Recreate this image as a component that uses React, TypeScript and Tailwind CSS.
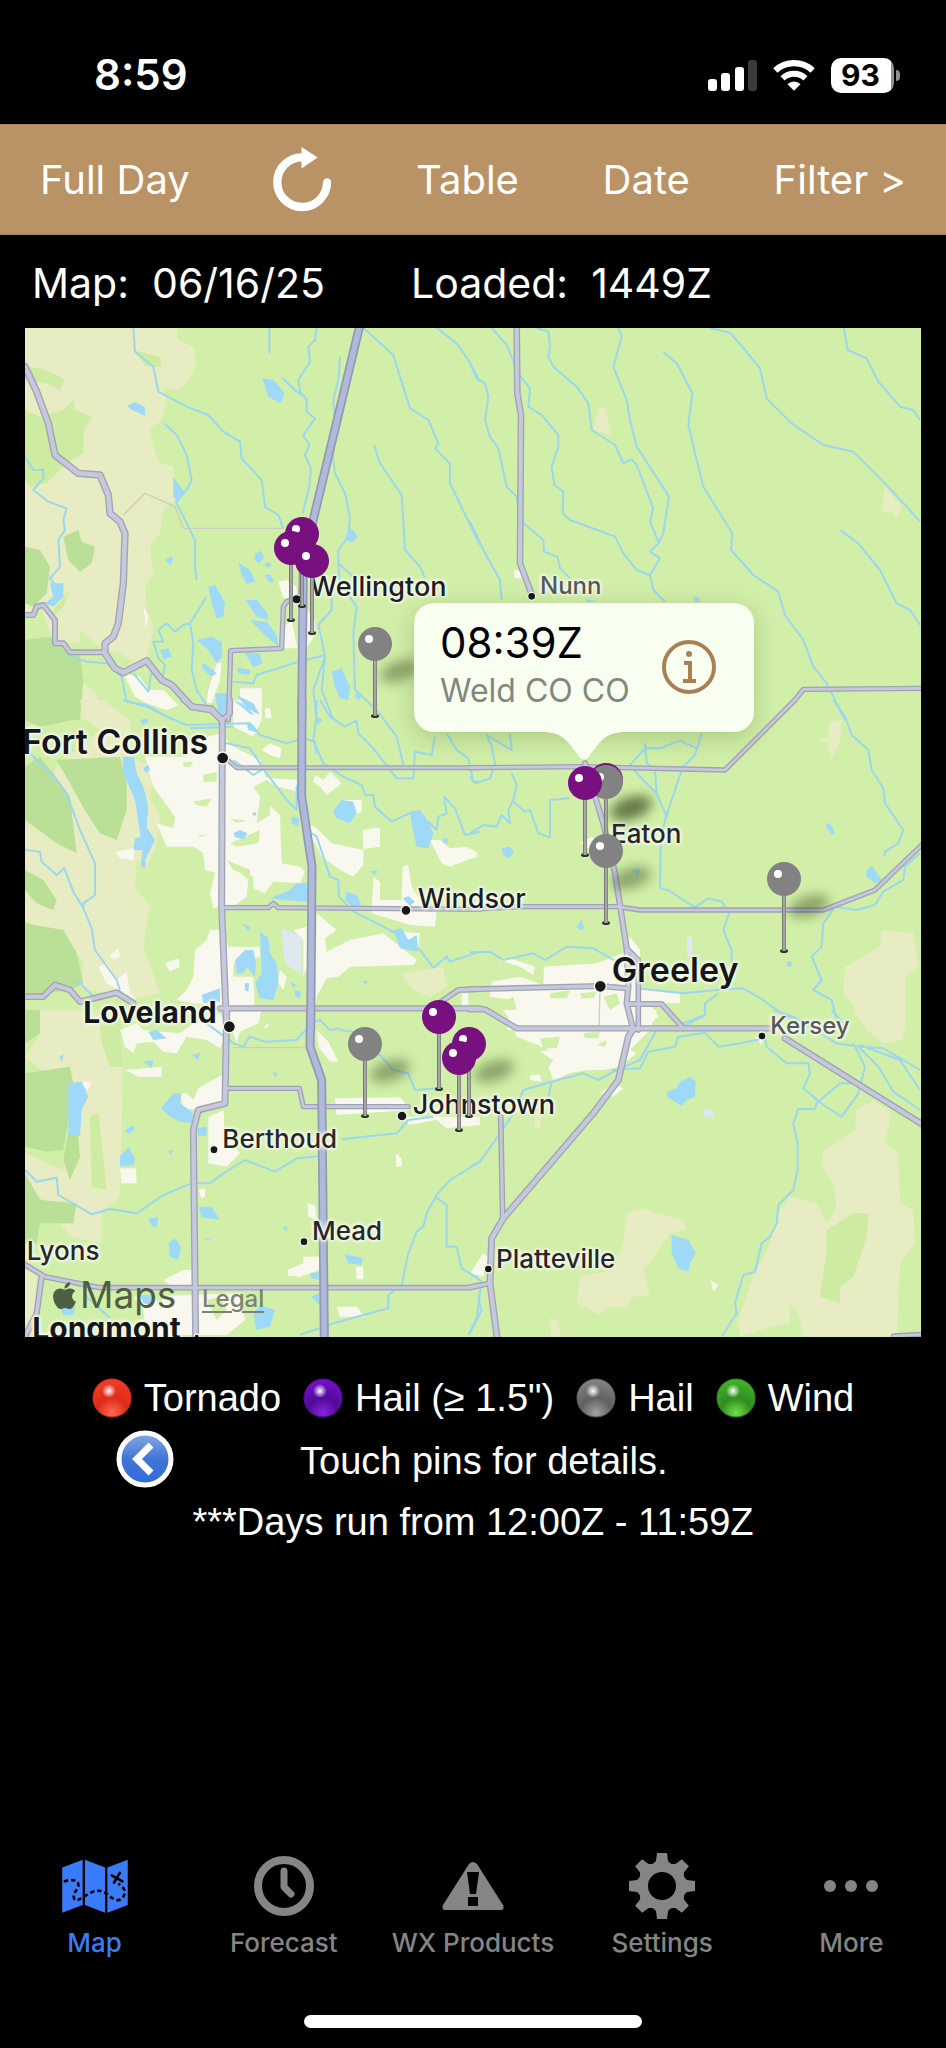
import React from 'react'
import { FaApple } from 'react-icons/fa'

// Map drawing units: three per CSS pixel at full width
const MAP_W = 2688
const MAP_H = 3027

type Road = [string, number]

type Sheet = {
  x: number
  y: number
  scrub: string[]
  meadow?: string[]
  forest?: string[]
  town: string[]
  park?: string[]
  field?: string[]
  lake: string[]
  river: string[]
  thin?: string[]
  road: Road[]
  highway?: string
}

const sheets: Sheet[] = [
  {
    x: -15,
    y: -24,
    scrub: [
      'M15 24H470L475 60 520 80 530 130 500 190 470 210 430 200 440 250 425 300 390 330 400 380 420 430 460 440 465 540 430 570 420 640 390 680 400 760 375 800 380 860 400 920 385 1000 360 1040 300 1000 250 990 180 930 180 970 100 960 60 860 15 900Z',
      'M130 1130 190 1090 230 1120 240 1200H190L140 1150Z',
    ],
    meadow: [
      'M15 140 60 145 110 165 132 180 120 210 80 190 15 180Z',
      'M130 270 160 240 165 270 215 290 190 340 190 400 140 430 80 490 30 500 15 480V270L60 290Z',
      'M340 90 420 110 425 140 380 140Z',
      'M100 870 150 810 130 860 100 890Z',
    ],
    forest: [
      'M15 680 60 690 90 740 80 820 40 860 15 850Z',
      'M130 650 175 630 185 665 225 680 215 730 180 755 145 720Z',
      'M15 960 90 950 180 1010 190 1080 180 1200H15Z',
    ],
    town: [
      'M310 1060 360 1070 385 1110 430 1110 475 1155 440 1170 380 1150 345 1130Z',
      'M660 1105H725V1165H690L660 1130Z',
      'M775 785 800 780 830 800 830 830 790 835Z',
      'M790 920 815 900 832 985 790 985Z',
      'M862 870 885 900 885 945 862 980Z',
      'M590 1030 605 1030 600 1080 575 1150 560 1150 565 1110Z',
      'M370 860 385 890 378 925Z',
      'M735 1165H750L755 1195H735Z',
    ],
    lake: [
      'M322 258 345 245 375 262 375 287 335 270Z',
      'M727 175 760 180 795 220 780 250 745 230Z',
      'M460 470 495 520 475 545 460 530Z',
      'M980 640 995 625 1013 650 1000 665 975 660Z',
      'M435 720 455 708 460 720 450 735Z',
      'M655 728 690 750 705 785 680 792 665 765Z',
      'M705 700 725 692 732 715 715 730 703 718Z',
      'M733 765 750 763 763 785 750 790Z',
      'M733 730 750 728 755 738 740 743Z',
      'M565 800 585 795 615 850 610 890 590 895 575 850Z',
      'M677 840 710 840 740 875 745 900 710 890Z',
      'M690 900 740 905 770 945 775 980 740 950Z',
      'M530 960 575 950 605 965 607 1010 590 1030 565 990Z',
      'M420 990 445 985 455 1010 430 1018Z',
      'M675 1000 720 1000 727 1030 700 1042Z',
      'M650 1042 690 1050 690 1065 655 1060Z',
      'M545 1030 560 1035 590 1060 575 1070 550 1050Z',
      'M935 1055 965 1045 990 1100 985 1140 960 1135 945 1100Z',
      'M585 1120H622V1200H600Z',
      'M650 1125 700 1150 720 1185 680 1165Z',
      'M90 790 130 790 130 830 100 860 75 850 100 830Z',
      'M1010 1115 1025 1120 1020 1140 1005 1135Z',
    ],
    river: [
      'M340 24 345 95 400 140 415 215 500 260 565 285 610 335 660 365 665 415 725 480 735 560 775 585 790 625',
      'M748 24V100',
      'M890 24 885 60 865 80 870 125 835 180 840 215 860 240 860 275 885 295 850 345 868 375 855 405 873 445 868 500 848 580',
      'M788 175 830 215 855 230',
      'M960 110 955 180 940 240 945 310 935 380 945 460 975 520 990 590 985 650 955 690 955 730 1000 770',
      'M1030 24 1120 105 1140 170 1170 265 1225 300 1255 370 1245 385 1290 430 1290 490 1380 675',
      'M1250 24 1310 70 1345 120 1380 185',
      'M1062 375 1080 430 1145 525 1155 690 1200 740 1215 775',
      'M435 312 470 345 500 405 515 480 500 510 470 535 470 550 525 660 525 740 530 780',
      'M15 410 40 450 70 450 70 475 40 510 85 545 140 565 130 600 135 630 115 660 120 740 90 775 110 800',
      'M150 1010 200 1025 260 1030 305 1070 320 1145 380 1155 460 1200',
      'M340 1060 385 1115 395 1050',
      'M560 830 510 910 490 915 465 935 440 910 415 930 430 965 400 965 415 1015 435 1035 425 1090',
      'M510 910 520 970 515 1050 530 1110 570 1170',
      'M935 830 935 870 895 915 905 960 915 1010 905 1040 880 1110 890 1200',
      'M955 690V740L960 790 1010 860 1000 940 1005 1110 1060 1160',
      'M640 1085 700 1090 710 1065 820 1030 915 1005',
      'M915 1010 905 1110 940 1200',
    ],
    thin: ['M310 585 375 520 465 560 490 625 790 625'],
    road: [
      ['M15 140 50 215 85 310 105 405 175 460 240 465 265 525 270 580 300 605 315 640 310 790 295 910 280 950 255 970 255 1000 285 1045 310 1058 380 1022 425 1080 455 1095 515 1160 575 1170 605 1200', 18],
      ['M15 885H40L50 860 70 855 105 900V970L130 970 150 997H255', 14],
      ['M625 1200 632 992 785 985 790 860 800 845 830 838', 12],
    ],
    highway: 'M1020 14 870 640 850 720 845 1200',
  },
  {
    x: 1335,
    y: -24,
    scrub: ['M383 265H405L425 345 370 330Z', 'M1245 500 1295 560 1280 595 1265 575 1235 575Z'],
    town: ['M133 750 155 752 160 775 133 775Z'],
    lake: ['M668 830 688 832 690 846 675 846Z', 'M345 838 380 842 350 846Z'],
    river: [
      'M65 24 110 75 145 160 180 205 175 260 215 285 265 345 265 380 245 440 253 495 280 515 278 580 300 600 435 650 460 700 500 750 540 765',
      'M0 130 20 175 45 190 55 230 45 300 60 350 85 385 110 500 140 530 150 600 220 660 222 695 262 710 270 745 300 775',
      'M200 24 235 35 240 80 235 110 250 140 320 200 355 250 365 330 435 375 460 430 485 418 500 435 550 565 540 605 565 665',
      'M445 24 455 50 430 140 470 240 480 300 500 380 597 530 580 640 565 670 540 695 570 715 540 765 550 810 585 845',
      'M580 97 620 130 667 220 655 315 680 420 700 500 787 640 783 690 850 765 925 815 945 885 1000 960 1030 1040 1070 1090 1125 1200',
      'M720 24 780 38 825 90 870 145 890 235 965 310 1060 375 1150 395 1245 490 1310 560 1350 605',
      'M1122 24 1133 90 1190 115 1225 185 1290 260 1330 270 1350 300',
      'M1110 630 1165 670 1230 750 1280 850 1320 870 1350 915',
      'M0 605 40 690 90 780 95 840',
    ],
    road: [
      ['M140 14 142 220 153 285 150 730 188 830', 16],
      ['M975 1140 1000 1108 1360 1105', 12],
    ],
  },
  {
    x: -15,
    y: 1116,
    scrub: [
      'M180 0H250L330 60 330 170 400 200 390 300 420 350 410 430 380 510 350 480 345 560 390 620 370 740 420 880 330 900 180 860 190 780 15 660V380L110 200 240 90 190 50Z',
      'M1140 820 1270 800 1280 860 1230 890 1180 870Z',
    ],
    forest: [
      'M15 200 60 170 100 220 150 290 170 460 110 430 15 360Z',
      'M110 180 300 170 320 250 320 330 290 420 240 400 200 340 150 250Z',
      'M15 510 70 540 110 600 100 630 50 610 15 570Z',
      'M15 670 130 690 170 760 190 850 150 870 15 890Z',
      'M15 0H180L160 60 60 80 15 60Z',
    ],
    town: [
      'M375 170H600L700 190 710 230 830 240 835 275 770 260 740 240 700 260 720 290 780 345 785 490 840 500 855 515 840 550 760 545 735 580 700 565 700 530 640 500 685 540 680 590 640 620H600L580 625 570 580 595 480 590 520 555 510 550 460 520 440 440 440 410 370 460 385 465 350 400 260Z',
      'M640 0H725V60L700 110 640 80Z',
      'M500 130 600 100 640 140 720 180 740 240 600 240 500 200Z',
      'M725 150 750 130 785 145 780 175 750 165Z',
      'M885 225 910 240 930 215 965 250 920 285 900 260 880 245Z',
      'M860 370 890 385 935 430 1030 450V495L1000 530 960 510 905 470 880 420Z',
      'M1028 390 1080 382V440L1030 447Z',
      'M1060 530 1080 545 1080 600 1145 600 1148 500 1165 495 1175 560 1200 600 1250 640 1245 680 1170 675 1055 640Z',
      'M890 640 950 690 915 715 920 755 990 720 1090 700 1190 780 1180 795 990 800 955 830 920 835 890 890 885 930Z',
      'M570 690 600 690 625 740 720 740 720 770 640 790 640 830 700 830 705 930 520 910 470 900 500 870 520 830 525 750 560 720Z',
      'M435 790 475 775 480 800 450 815Z',
      'M285 455 345 445 340 480 300 475Z',
      'M270 765 295 745 300 770 280 780Z',
      'M235 800 260 790 290 840 320 815 330 880 350 900 260 850Z',
      'M1230 420 1260 420 1290 445 1340 440 1375 470 1340 480 1290 500 1265 490Z',
      'M1325 880H1345V925H1325Z',
      'M780 810 800 830 790 870 775 850Z',
      'M820 690 860 680 860 800 850 830 850 720Z',
      'M975 300H1025V335L1000 345Z',
      'M1150 695 1200 700 1195 740 1160 730Z',
    ],
    park: [
      'M490 185H520L510 200H490Z',
      'M550 225 590 215 590 245H550Z',
      'M520 305 575 295 560 320 530 315Z',
      'M630 430 720 390 715 430 650 440Z',
      'M620 480 690 510 690 530 640 510Z',
      'M530 408 565 402 545 410Z',
      'M630 355 680 362 650 368Z',
      'M720 290 750 310 750 345 710 370 715 330Z',
    ],
    field: ['M785 685 845 710 845 825 795 790Z'],
    lake: [
      'M308 170H342L350 220 370 260 385 320 380 380 405 420 375 480 378 505 362 500 368 450 340 450 345 415 362 410 345 300 310 220Z',
      'M370 205 385 195 390 210 378 218Z',
      'M360 60 380 55 385 65 370 75Z',
      'M640 400 660 390 683 400 670 418 645 412Z',
      'M695 340 710 335 705 350Z',
      'M815 350 838 355 835 380 815 370Z',
      'M938 335 965 300 1000 305 1010 340 990 370 950 355Z',
      'M1170 335 1200 330 1225 365 1240 400 1225 445 1190 440 1180 400Z',
      'M1270 415H1283V430H1270Z',
      'M750 595 810 570 830 550 862 550V605L800 600Z',
      'M1050 515 1073 510 1065 525Z',
      'M980 575 1010 585 1025 615 1000 620 975 600Z',
      'M1148 595 1165 588 1185 605 1170 618Z',
      'M665 670 690 680 688 695Z',
      'M720 695 745 715 750 760 770 790 775 850 760 900 720 895 705 850 725 820 722 750Z',
      'M645 780 675 750 700 750 708 790 705 830 680 800 670 820 650 820Z',
      'M545 885 600 865 600 905 550 910Z',
      'M810 845 830 855 820 865Z',
      'M825 870 843 875 838 895 825 888Z',
      'M1028 840 1045 845 1035 855Z',
      'M588 0H620V50L600 45Z',
      'M675 850H687L685 875 675 870Z',
      'M640 0 665 10 705 45 690 42Z',
      'M680 70 700 75 720 100 685 90Z',
      'M890 50 908 60 892 75Z',
      'M1120 690 1145 685 1165 720 1190 705 1195 755 1140 745Z',
    ],
    river: [
      'M310 0 380 20 440 50 500 75 690 70 720 105 800 130 850 115 885 125 888 160',
      'M510 85 640 80',
      'M30 160 110 240 140 280 180 390 225 490 225 585 190 610 190 630',
      'M15 450 60 455 65 485 110 525 133 505 160 575 190 625 215 685 225 750 290 840 300 870',
      'M600 125 690 145 740 220 800 300 830 330 830 260 850 230',
      'M640 180 700 225 740 200',
      'M890 0 888 60 880 120 910 190 970 230 1025 255 1035 285 1060 285 1065 320 1115 365 1180 335',
      'M900 0 930 50 975 80 1010 62 1015 100 1060 145 1130 235 1180 235 1185 155 1235 165 1245 110',
      'M1070 30 1130 110 1150 195',
      'M1280 100 1310 150 1345 175 1360 245 1380 245',
      'M1225 365 1250 390 1255 350 1280 340 1272 290 1305 325 1335 405 1380 395',
      'M875 400 890 410 930 530 955 540 957 590 1000 635 1100 685 1125 700 1200 750 1240 803 1280 770 1290 785 1380 755',
      'M160 850 175 845 220 890',
    ],
    road: [
      ['M490 0 520 20 575 25 605 60 630 40 630 0', 14],
      ['M607 60 605 620 620 990', 17],
      ['M610 170 650 203H1380', 11],
      ['M615 623H745L760 610 775 623 1380 628', 12],
      ['M5 890H70L105 855 150 870 180 905 290 878 340 910', 16],
      ['M600 925H1380', 15],
      ['M1257 910 1315 870 1380 867', 14],
    ],
    highway: 'M846 0 845 290 876 500 872 990',
  },
  {
    x: 1335,
    y: 1116,
    scrub: [
      'M1078 65 1115 60 1110 120 1085 180 1070 130 1048 120 1075 110Z',
      'M1235 690 1330 700 1345 800 1305 830 1305 990 1205 990 1120 880 1125 800 1230 740Z',
    ],
    town: [
      'M222 800 380 790 460 760 480 710 510 750 510 865 560 870 630 880 630 910 540 910 565 950 520 990H110L125 900 60 890 65 845 150 830 220 855Z',
      'M0 445 25 460 0 472Z',
      'M90 780 120 775 195 800 190 825 150 800Z',
      'M330 430 365 410 400 440 400 470Z',
    ],
    park: [
      'M240 880 300 870 290 895 240 895Z',
      'M330 880 380 875 370 895 335 895Z',
      'M110 900 130 890 140 930 190 970 130 960Z',
      'M265 930 300 935 280 948Z',
      'M400 890 440 880 450 910 420 930Z',
    ],
    field: ['M650 710H667V770H652Z'],
    lake: [
      'M95 445 120 440 132 460 115 475 100 465Z',
      'M320 680 335 660 343 685 330 690Z',
      'M1065 375 1080 368 1095 400 1085 405Z',
      'M1188 515 1205 497 1235 540 1215 550 1190 530Z',
      'M485 510 510 508 505 525Z',
      'M950 785H965V800H952Z',
    ],
    river: [
      'M1090 0 1125 50 1145 105 1195 150 1205 210 1240 265 1245 310 1300 390 1285 430 1245 455 1243 470',
      'M0 230 15 250 60 235 75 190 65 140 50 105 125 150 120 100',
      'M125 220 140 255 130 300 115 330 120 370 95 345 80 380 40 375 0 400',
      'M130 305 165 335 180 330 205 400 240 412 240 300 300 295',
      'M525 130 530 190 555 210 560 280 590 350 595 330 625 240 640 200 675 165 695 100',
      'M680 145 630 122 570 145 525 145 480 195 510 230 560 280',
      'M590 340 572 420 570 565 595 570 640 600 675 622 715 595 755 605 777 640 760 690 785 750 785 790',
      'M0 757 60 755 100 780 190 760 225 780 290 740 370 745 450 790',
      'M500 865 640 880 740 870 820 865 880 900 940 945 1050 980',
      'M745 880 705 910 705 945 640 980',
      'M1350 460 1305 500 1300 540 1240 575 1215 615 1160 630 1095 620 1060 670 1055 740 1025 770 1055 840 1030 870 1085 900 1100 960',
    ],
    thin: ['M390 870 387 980'],
    road: [
      ['M0 203 330 200 765 210 975 0', 12],
      ['M345 190 400 370 435 520 470 745 475 860 470 910 490 990', 15],
      ['M0 628 165 620H440L510 630H1060L1215 570 1360 430', 12],
      ['M0 868 390 858 470 865', 14],
      ['M470 745 505 780V990', 13],
      ['M470 912H575L640 985', 14],
      ['M0 928H45L140 985H900', 15],
    ],
  },
  {
    x: -15,
    y: 2046,
    scrub: [
      'M60 0H250L300 60 310 120 300 560 245 610 245 700 150 680 100 610 60 560 15 520V430L130 480 150 350 90 200 15 140 60 70Z',
      'M15 775 50 800 45 900 15 950Z',
    ],
    meadow: ['M235 0 300 0 310 170 270 170 245 100Z', 'M210 320 235 310 260 540 215 530Z'],
    forest: [
      'M15 190 150 170 160 220 150 300 130 420 80 425 15 410Z',
      'M15 0H60V70L15 100Z',
      'M15 490 60 570 170 580 160 640 60 640 50 700H15Z',
      'M150 340 170 330 180 440 150 510 130 450Z',
    ],
    town: [
      'M300 60 350 40 370 60 480 70 520 40 600 10 625 60 600 115 560 90 500 80 470 130 430 125 400 95 350 100 340 130 315 110Z',
      'M625 0H725L715 40 660 65 650 100 640 70Z',
      'M315 180 425 170 425 200 355 200Z',
      'M535 235 605 195 620 280 540 300 490 295 480 250 500 250 520 270Z',
      'M565 320 612 300V370L660 430 620 470 565 460Z',
      'M300 475H348L350 520 305 520Z',
      'M535 540 555 535 555 560 545 565Z',
      'M862 580 885 585 890 630 865 620Z',
      'M803 780 850 760 850 740 900 740 898 780 840 800 805 798Z',
      'M1008 770H1030V808H1010Z',
      'M1128 430 1145 445 1145 470H1128Z',
      'M490 780 515 780 515 825H450L430 810Z',
      'M340 860 660 850 675 930 620 975H380L370 900Z',
      'M950 890 1010 890 1035 920 960 920Z',
      'M890 60 925 95 955 155 930 155 895 110Z',
      'M945 265 1140 262 1170 300 950 315Z',
      'M1160 320H1380V345L1280 355 1250 330 1165 345Z',
      'M185 215 215 215 205 240 190 230Z',
      'M730 50 750 38 740 55Z',
    ],
    park: ['M560 870 600 860 620 900 590 930Z', 'M400 860 440 850 420 880Z'],
    lake: [
      'M145 220 185 215 205 260 185 300 180 378 145 375Z',
      'M385 65 410 60 440 85 400 90Z',
      'M515 135 540 128 535 150Z',
      'M370 155 400 150 395 175Z',
      'M423 295 460 250 485 250 480 280 520 310 515 340 480 335 450 320Z',
      'M530 355 560 350 560 375 535 380Z',
      'M315 360 340 345 345 360 325 372Z',
      'M300 440 325 410 345 445 340 465 300 470Z',
      'M445 420 460 422 450 435Z',
      'M385 625 415 622 410 650 395 648Z',
      'M535 590 575 590 600 630 545 622Z',
      'M445 700 465 685 483 710 475 750 450 740Z',
      'M757 188 772 188 768 203Z',
      'M787 650 803 650 800 665Z',
      'M973 732 1028 745 1025 765 985 760Z',
      'M870 790 900 785 895 810 875 805Z',
      'M873 860 898 850 900 885Z',
      'M700 910 720 885 765 900 750 950 710 960Z',
      'M118 140 132 133 125 155Z',
      'M120 890 165 890 160 915 130 915Z',
      'M360 855 400 855 390 885 370 880Z',
      'M550 685 580 685 560 690Z',
    ],
    river: [
      'M15 480 50 515 110 503 115 555 215 613 270 597 350 610 430 555 515 520 570 520 610 490 675 450 765 485 830 445 905 438',
      'M560 40 600 70 640 100 670 110 690 80 735 95 830 90 875 40 900 30 930 60 960 55',
      'M960 60 1000 65 1075 130 1120 180 1165 190 1185 240 1260 235',
      'M965 388 1130 370 1165 330 1240 320',
      'M1380 455 1290 510 1250 555 1220 610 1210 650 1190 665 1165 730 1145 825 1105 855 1105 895 940 940 840 975',
      'M1245 560 1280 585 1280 710 1310 710 1325 775 1375 805',
      'M1380 850 1370 925 1345 975',
      'M200 860 270 925',
    ],
    thin: ['M640 113H860'],
    road: [
      ['M620 0 615 280 535 300 520 360 527 990', 17],
      ['M620 235H838L850 290H1165', 12],
      ['M5 758 75 800 240 833H1340L1380 825', 13],
      ['M65 800 50 910 15 980', 15],
    ],
    highway: 'M872 0 870 110 905 210 913 990',
  },
  {
    x: 1335,
    y: 2046,
    scrub: [
      'M1150 0H1300V90L1240 100 1190 60Z',
      'M1060 420 1155 360 1160 300 1210 270 1265 310 1245 400 1285 430 1290 580 1330 600 1335 700 1290 760 1280 980H1000L985 910 960 880 960 940 900 950 810 980 805 930 850 800 900 700 930 600 960 560 1040 580 1070 640 1100 590 1090 520 1055 470Z',
      'M470 610 520 595 560 610 640 630 650 660 600 670 560 730 520 780 540 855 490 860 470 890 410 890 390 915 320 880 330 800 430 780 460 700Z',
      'M235 925 260 930 275 980H245Z',
      'M195 310 215 300 210 355H195Z',
    ],
    meadow: ['M1070 660 1150 610 1195 610 1190 680 1150 800 1110 830 1110 880 1050 860 1060 790 1070 720Z'],
    town: [
      'M100 0H560L540 60 500 100 480 120 500 130 450 170 400 180 350 180 300 190 250 210 235 170 250 150 210 125 240 120 140 80 120 30Z',
      'M390 250 430 220 460 235 430 260Z',
      'M180 195 210 195 215 215 180 210Z',
      'M722 810 745 825 730 845Z',
      'M40 730 55 740 40 800 0 790Z',
      'M855 80 880 80 875 105Z',
    ],
    park: [
      'M210 85 270 80 260 115 220 115Z',
      'M340 70 390 65 385 85 345 85Z',
      'M380 105 410 90 405 110Z',
    ],
    field: ['M697 300 720 295 735 320 705 320Z'],
    lake: [
      'M590 245 620 235 630 215 660 200 677 215 675 260 650 270 635 288 615 275 595 265Z',
      'M605 675 655 690 677 730 660 760 655 785 625 775 605 730Z',
    ],
    river: [
      'M0 470 30 455 90 370 130 310 160 240 245 215 340 190 385 210 440 180 510 150 560 60',
      'M425 180 510 175 535 125 615 110 625 80 705 68 745 110 810 100 885 85 890 110 950 160 1015 160 1020 190 1000 235 1060 285 1115 320 1165 250 1185 170 1150 100',
      'M910 0 970 20 1100 100 1170 110 1240 115 1350 180',
      'M1085 0 1130 50',
      'M1165 110 1225 170 1270 245 1350 300',
      'M1170 105 1290 150 1350 240',
      'M1160 220H1110L1040 280 1035 297H985L970 340 983 400 983 480 970 540 925 585 920 640 900 680 875 700 855 785 820 795 795 880 800 910 755 980',
      'M640 40 705 15V0',
      'M0 790 35 815 25 870 35 900 0 970',
      'M245 215 235 260',
    ],
    road: [
      ['M490 57 475 80 445 210 370 310 100 625 65 685 60 820 82 990', 17],
      ['M92 320 98 625', 13],
      ['M0 833 60 820', 13],
      ['M945 85 1360 345', 16],
      ['M1270 978 1360 973', 12],
    ],
  },
]

type Town = [name: string, x: number, y: number, style: string]

const bigCity = 'text-[34px] font-semibold text-[#15161a]'
const city = 'text-[30px] font-bold text-[#15161a]'
const bigTown = 'text-[27px] font-medium text-[#1c1d22]'
const smallTown = 'text-[26px] font-medium text-[#26272b]'
const hamlet = 'text-[24px] font-medium text-[#55585c]'

const towns: Town[] = [
  ['Wellington', 855, 816, bigTown],
  ['Nunn', 1545, 811, hamlet],
  ['Fort Collins', -9, 1292, bigCity],
  ['Loveland', 175, 2096, city],
  ['Windsor', 1178, 1751, bigTown],
  ['Eaton', 1758, 1558, smallTown],
  ['Greeley', 1760, 1978, bigCity],
  ['Kersey', 2236, 2131, hamlet],
  ['Johnstown', 1163, 2369, bigTown],
  ['Berthoud', 592, 2473, smallTown],
  ['Mead', 861, 2748, smallTown],
  ['Lyons', 5, 2807, smallTown],
  ['Platteville', 1413, 2832, smallTown],
  ['Longmont', 22, 3044, city],
]

const dots = [
  [815, 814, 14],
  [1520, 805, 12],
  [593, 1290, 18],
  [613, 2096, 18],
  [1143, 1747, 15],
  [1726, 1975, 18],
  [2211, 2124, 12],
  [1131, 2364, 15],
  [567, 2465, 12],
  [837, 2741, 12],
  [1390, 2823, 12],
  [515, 3026, 8],
]

const pins = [
  { id: 1, x: 832, y: 617, kind: 'big', shadow: false },
  { id: 2, x: 797, y: 659, kind: 'big', shadow: false },
  { id: 3, x: 862, y: 700, kind: 'big', shadow: false },
  { id: 4, x: 1050, y: 948, kind: 'hail', shadow: true },
  { id: 5, x: 1743, y: 1357, kind: 'big', shadow: true },
  { id: 6, x: 1743, y: 1363, kind: 'hail', shadow: true },
  { id: 7, x: 1679, y: 1364, kind: 'big', shadow: false },
  { id: 8, x: 1742, y: 1569, kind: 'hail', shadow: true },
  { id: 9, x: 2276, y: 1652, kind: 'hail', shadow: true },
  { id: 10, x: 1242, y: 2067, kind: 'big', shadow: false },
  { id: 11, x: 1020, y: 2148, kind: 'hail', shadow: true },
  { id: 12, x: 1333, y: 2148, kind: 'big', shadow: true },
  { id: 13, x: 1303, y: 2189, kind: 'big', shadow: false },
]

const at = (x: number, y: number) => ({
  left: `${(x / MAP_W) * 100}%`,
  top: `${(y / MAP_H) * 100}%`,
})

function Layer({ children }: { children: (s: Sheet) => React.ReactNode }) {
  return (
    <>
      {sheets.map((s, i) => (
        <g key={i} transform={`translate(${s.x} ${s.y})`}>{children(s)}</g>
      ))}
    </>
  )
}

function Terrain() {
  return (
    <svg viewBox={`0 0 ${MAP_W} ${MAP_H}`} className="block h-auto w-full" aria-hidden="true">
      <rect width={MAP_W} height={MAP_H} fill="#d1efa8" />
      <Layer>
        {s => (
          <>
            <path d={s.scrub.join('')} fill="#e7ecc2" />
            <path d={(s.meadow ?? []).join('')} fill="#cdeca2" />
            <path d={(s.forest ?? []).join('')} fill="#badf96" />
          </>
        )}
      </Layer>
      <Layer>
        {s => (
          <>
            <path d={s.town.join('')} fill="#f8f8ef" />
            <path d={(s.park ?? []).join('')} fill="#d1efa8" />
            <path d={(s.field ?? []).join('')} fill="#dfe8f0" />
          </>
        )}
      </Layer>
      <g fill="none" strokeLinejoin="round">
        <Layer>{s => <path d={s.river.join('')} stroke="#9bd7ee" strokeWidth="6" />}</Layer>
      </g>
      <Layer>{s => <path d={s.lake.join('')} fill="#9ed9f8" />}</Layer>
      <g fill="none" strokeLinejoin="round" strokeLinecap="round">
        <Layer>{s => <path d={(s.thin ?? []).join('')} stroke="#c9cfc0" strokeWidth="4" />}</Layer>
        <Layer>{s => s.road.map(([d, w]) => <path key={d} d={d} stroke="#a0a3b5" strokeWidth={w + 4} />)}</Layer>
        <Layer>{s => s.road.map(([d, w]) => <path key={d} d={d} stroke="#c6c9db" strokeWidth={w - 4} />)}</Layer>
        <Layer>{s => <path d={s.highway ?? ''} stroke="#9098b4" strokeWidth="27" />}</Layer>
        <Layer>{s => <path d={s.highway ?? ''} stroke="#b0b9da" strokeWidth="17" />}</Layer>
      </g>
      {dots.map(([x, y, r]) => (
        <circle key={`${x}-${y}`} cx={x} cy={y} r={r} fill="#17181b" stroke="#f4f7ea" strokeWidth="4" />
      ))}
    </svg>
  )
}

function Pin({ x, y, kind, shadow }: { x: number; y: number; kind: string; shadow: boolean }) {
  return (
    <button
      type="button"
      aria-label={kind === 'big' ? 'Hail report, 1.5 inches or more' : 'Hail report'}
      className="absolute h-[92px] w-[34px] -translate-x-1/2"
      style={at(x, y - 51)}
    >
      <svg viewBox="0 0 34 92" className="block h-full w-full overflow-visible">
        {shadow && (
          <ellipse cx="42" cy="44" rx="21" ry="10" fill="#26380f" opacity="0.4" transform="rotate(-18 42 44)" className="blur-[6px]" />
        )}
        <ellipse cx="17" cy="89" rx="4" ry="2" fill="#2c332a" />
        <rect x="15" y="30" width="4" height="59" fill="#a6a6a6" />
        <rect x="15" y="30" width="1" height="59" fill="#777" />
        <rect x="18" y="30" width="1" height="59" fill="#858585" />
        <circle cx="17" cy="17" r="17" fill={kind === 'big' ? '#78107f' : '#828282'} />
        <circle cx="11" cy="12" r="4" fill="#fff" />
      </svg>
    </button>
  )
}

function Callout() {
  return (
    <div
      className="absolute flex h-[129px] w-[340px] -translate-x-1/2 items-center justify-between rounded-[20px] bg-[#f9fff0] pl-[26px] pr-[37px] shadow-[0_6px_24px_rgba(60,90,20,0.25)]"
      style={at(1677, 824)}
    >
      <div>
        <div className="text-[42px] leading-[48px] text-black">08:39Z</div>
        <div className="text-[32px] leading-[48px] text-[#82877c]">Weld CO CO</div>
      </div>
      <button type="button" aria-label="Report details">
        <svg viewBox="0 0 56 56" className="size-14" fill="none" stroke="#a98056">
          <circle cx="28" cy="28" r="25" strokeWidth="4" />
          <circle cx="28" cy="15" r="3" fill="#a98056" stroke="none" />
          <path d="M23 24h6v18M22 42h13" strokeWidth="4" />
        </svg>
      </button>
      <svg viewBox="0 0 88 32" className="absolute left-1/2 top-full -mt-px h-8 w-[88px] -translate-x-1/2" aria-hidden="true">
        <path d="M0 0H88V1C66 1 62 8 50 24Q44 33 38 24C26 8 22 1 0 1Z" fill="#f9fff0" />
      </svg>
    </div>
  )
}

function StormMap() {
  return (
    <section aria-label="Storm report map" className="relative mx-[25px] overflow-hidden">
      <Terrain />
      {towns.map(([name, x, y, style]) => (
        <span
          key={name}
          className={`absolute -translate-y-full whitespace-nowrap leading-none [text-shadow:0_0_2px_#f6f9ea,0_0_2px_#f6f9ea,0_0_3px_#f6f9ea,0_0_4px_#f6f9ea,0_0_4px_#f6f9ea,0_0_4px_#f6f9ea] ${style}`}
          style={at(x, y)}
        >
          {name}
        </span>
      ))}
      <div className="absolute bottom-[22px] left-6 flex items-center text-[37px] leading-10 text-[#4f5f45]">
        <FaApple className="size-[31px]" />
        <span>Maps</span>
      </div>
      <a href="#legal" className="absolute bottom-6 left-[177px] text-[24px] font-medium leading-7 text-[#7b8472] underline decoration-2 underline-offset-4">
        Legal
      </a>
      {pins.map(p => (
        <Pin key={p.id} x={p.x} y={p.y} kind={p.kind} shadow={p.shadow} />
      ))}
      <Callout />
    </section>
  )
}

function StatusBar() {
  return (
    <div className="flex h-[124px] items-center justify-between pl-[94px] pr-[46px] pt-[26px]">
      <span className="text-[42px] font-semibold leading-none">8:59</span>
      <div className="flex items-center gap-4">
        <svg viewBox="0 0 49 32" className="h-8 w-[49px]" fill="#fff">
          <rect x="0" y="20" width="9" height="12" rx="3" />
          <rect x="13" y="14" width="9" height="18" rx="3" />
          <rect x="27" y="8" width="9" height="24" rx="3" />
          <rect x="40" y="1" width="9" height="31" rx="3" fill="#3b3b3b" />
        </svg>
        <svg viewBox="244 42 128 98" className="h-8 w-[42px]" fill="none" stroke="#fff">
          <path d="M251 77A84 84 0 0 1 365 77" strokeWidth="19" />
          <path d="M273 101A51 51 0 0 1 343 101" strokeWidth="18" />
          <path d="M308 139 288 119A28 28 0 0 1 328 119Z" fill="#fff" stroke="none" />
        </svg>
        <div className="flex items-center gap-[2px]">
          <div className="flex h-[35px] w-[63px] items-center justify-center rounded-[10px] bg-linear-to-r from-white from-95% to-[#8f8f8f] to-95% pr-1 text-[30px] font-bold leading-none text-black">
            93
          </div>
          <div className="h-[11px] w-1 rounded-r-full bg-[#8f8f8f]" />
        </div>
      </div>
    </div>
  )
}

function Toolbar() {
  return (
    <nav className="flex h-[111px] items-center justify-between border-y border-[#a58458] bg-[#b99265] px-10 text-[40px] leading-none">
      <button type="button">Full Day</button>
      <button type="button" aria-label="Reload">
        <svg viewBox="52 27 178 196" className="h-[65px] w-[59px]" fill="none">
          <path d="M215 134A75 75 0 1 1 141 58" stroke="#fff" strokeWidth="25" strokeLinecap="round" />
          <path d="M138 27V92L187 59Z" fill="#fff" />
        </svg>
      </button>
      <button type="button">Table</button>
      <button type="button">Date</button>
      <button type="button">Filter &gt;</button>
    </nav>
  )
}

function Ball({ id, light, mid, dark }: { id: string; light: string; mid: string; dark: string }) {
  return (
    <svg viewBox="0 0 40 40" className="size-10 shrink-0" aria-hidden="true">
      <defs>
        <radialGradient id={id} cx="0.5" cy="0.9" r="0.9">
          <stop offset="0" stopColor={light} />
          <stop offset="0.45" stopColor={dark} />
          <stop offset="1" stopColor={mid} />
        </radialGradient>
        <radialGradient id={`${id}-shine`}>
          <stop offset="0" stopColor="#fff" />
          <stop offset="1" stopColor="#fff" stopOpacity="0" />
        </radialGradient>
      </defs>
      <circle cx="20" cy="20" r="19" fill={`url(#${id})`} stroke={dark} strokeWidth="1" />
      <circle cx="17" cy="13" r="7" fill={`url(#${id}-shine)`} />
    </svg>
  )
}

const legend = [
  { id: 'tornado', label: 'Tornado', light: '#ff6a50', mid: '#f23c28', dark: '#dc2b1a' },
  { id: 'big-hail', label: 'Hail (≥ 1.5")', light: '#8a22e0', mid: '#7512c8', dark: '#520a98' },
  { id: 'hail', label: 'Hail', light: '#a3a3a3', mid: '#858585', dark: '#606060' },
  { id: 'wind', label: 'Wind', light: '#6fe04a', mid: '#43b52b', dark: '#2f8d20' },
]

function Legend() {
  return (
    <div className="font-['Liberation_Sans',Arial,sans-serif] text-[38px] leading-10">
      <ul className="mt-[41px] flex items-center justify-center gap-[22px]">
        {legend.map(l => (
          <li key={l.id} className="flex items-center gap-3 whitespace-nowrap">
            <Ball id={l.id} light={l.light} mid={l.mid} dark={l.dark} />
            {l.label}
          </li>
        ))}
      </ul>
      <div className="mt-3 flex items-center gap-[126px] pl-[116px]">
        <button type="button" aria-label="Previous day">
          <svg viewBox="0 0 58 58" className="block size-[58px]">
            <defs>
              <linearGradient id="back" x1="0" y1="0" x2="0" y2="1">
                <stop offset="0" stopColor="#86a9e4" />
                <stop offset="0.5" stopColor="#4175d4" />
                <stop offset="1" stopColor="#2f6ae0" />
              </linearGradient>
            </defs>
            <circle cx="29" cy="29" r="26" fill="url(#back)" stroke="#fff" strokeWidth="5" />
            <path d="M35 15 21 29 35 43" fill="none" stroke="#fff" strokeWidth="7" />
          </svg>
        </button>
        <p className="pt-1">Touch pins for details.</p>
      </div>
      <p className="mt-[14px] text-center">***Days run from 12:00Z - 11:59Z</p>
    </div>
  )
}

function MapIcon() {
  return (
    <svg viewBox="183 116 199 164" className="h-[54px] w-[66px]">
      <path d="M183 142 245 118V256L183 279ZM252 118 313 142V279L252 256ZM320 142 382 118V256L320 279Z" fill="currentColor" />
      <g fill="none" stroke="#000" strokeWidth="8">
        <path d="M188 184C215 176 232 180 232 195S216 215 218 232 232 240 250 230C285 205 305 210 322 225S360 250 370 228 362 200 354 190" strokeDasharray="13 9" />
        <path d="M333 166 366 184M358 158 340 188" strokeLinecap="round" />
      </g>
    </svg>
  )
}

function ClockIcon() {
  return (
    <svg viewBox="0 0 60 60" className="size-[60px]" fill="none" stroke="currentColor">
      <circle cx="30" cy="30" r="26" strokeWidth="8" />
      <path d="M30 15V31L37 38" strokeWidth="7" strokeLinecap="round" strokeLinejoin="round" />
    </svg>
  )
}

function WarningIcon() {
  return (
    <svg viewBox="0 0 62 48" className="h-12 w-[62px]">
      <path d="M27 2Q31-2 35 2L61 43Q63 48 58 48H4Q-1 48 1 43Z" fill="currentColor" />
      <path d="M25 10H37L34 32H28ZM26 35H36V44H26Z" fill="#000" />
    </svg>
  )
}

function GearIcon() {
  return (
    <svg viewBox="-33 -33 66 66" className="size-[66px]" fill="currentColor">
      <circle r="19" fill="none" stroke="currentColor" strokeWidth="10" />
      {[0, 45, 90, 135, 180, 225, 270, 315].map(a => (
        <path key={a} d="M-5-33H5L6-25 10-21H-10L-6-25Z" transform={`rotate(${a})`} />
      ))}
    </svg>
  )
}

function MoreIcon() {
  return (
    <svg viewBox="0 0 54 12" className="h-3 w-[54px]" fill="currentColor">
      <circle cx="6" cy="6" r="6" />
      <circle cx="27" cy="6" r="6" />
      <circle cx="48" cy="6" r="6" />
    </svg>
  )
}

const tabs = [
  { label: 'Map', icon: <MapIcon />, active: true },
  { label: 'Forecast', icon: <ClockIcon /> },
  { label: 'WX Products', icon: <WarningIcon /> },
  { label: 'Settings', icon: <GearIcon /> },
  { label: 'More', icon: <MoreIcon /> },
]

function TabBar() {
  return (
    <footer className="mt-auto flex flex-col items-center pb-5">
      <nav className="grid w-full grid-cols-5">
        {tabs.map(t => (
          <button
            key={t.label}
            type="button"
            className={`flex flex-col items-center gap-[5px] whitespace-nowrap text-[26px] font-medium leading-8 ${t.active ? 'text-[#3a7bfa]' : 'text-[#858585]'}`}
          >
            <span className="flex h-[72px] items-center">{t.icon}</span>
            {t.label}
          </button>
        ))}
      </nav>
      <div className="mt-14 h-[13px] w-[338px] rounded-full bg-white" />
    </footer>
  )
}

export default function App() {
  return (
    <div className="flex min-h-screen flex-col bg-black font-['Inter',sans-serif] text-white">
      <StatusBar />
      <Toolbar />
      <div className="flex h-[93px] items-center whitespace-pre pl-8 pt-1 text-[41px] leading-none">
        <span className="w-[379px]">{'Map:  06/16/25'}</span>
        <span>{'Loaded:  1449Z'}</span>
      </div>
      <StormMap />
      <Legend />
      <TabBar />
    </div>
  )
}
